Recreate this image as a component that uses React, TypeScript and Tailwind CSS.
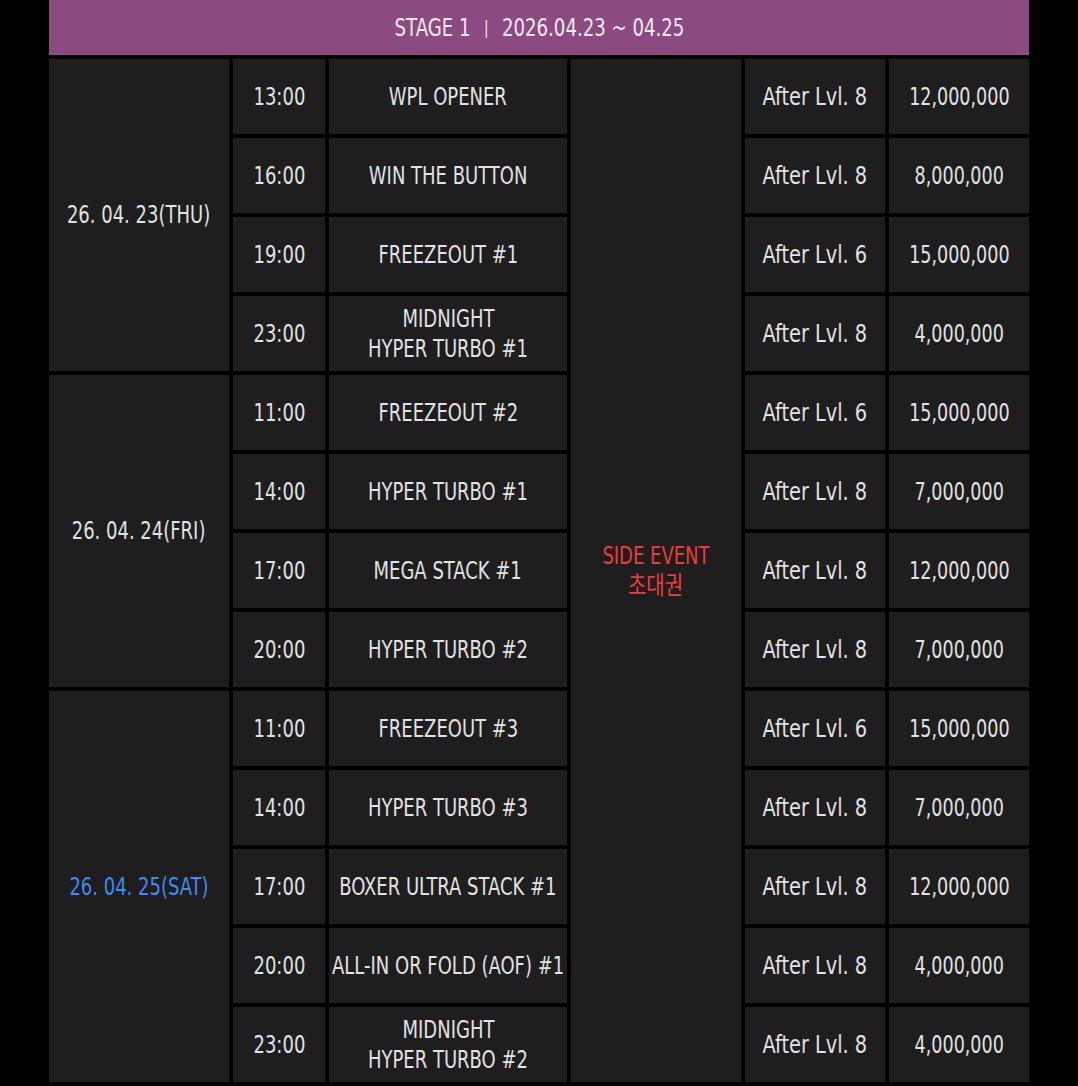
import React from "react";

type Row = { time: string; name: string[]; lvl: string; gtd: string };

const rows: Row[] = [
  { time: "13:00", name: ["WPL OPENER"], lvl: "After Lvl. 8", gtd: "12,000,000" },
  { time: "16:00", name: ["WIN THE BUTTON"], lvl: "After Lvl. 8", gtd: "8,000,000" },
  { time: "19:00", name: ["FREEZEOUT #1"], lvl: "After Lvl. 6", gtd: "15,000,000" },
  { time: "23:00", name: ["MIDNIGHT", "HYPER TURBO #1"], lvl: "After Lvl. 8", gtd: "4,000,000" },
  { time: "11:00", name: ["FREEZEOUT #2"], lvl: "After Lvl. 6", gtd: "15,000,000" },
  { time: "14:00", name: ["HYPER TURBO #1"], lvl: "After Lvl. 8", gtd: "7,000,000" },
  { time: "17:00", name: ["MEGA STACK #1"], lvl: "After Lvl. 8", gtd: "12,000,000" },
  { time: "20:00", name: ["HYPER TURBO #2"], lvl: "After Lvl. 8", gtd: "7,000,000" },
  { time: "11:00", name: ["FREEZEOUT #3"], lvl: "After Lvl. 6", gtd: "15,000,000" },
  { time: "14:00", name: ["HYPER TURBO #3"], lvl: "After Lvl. 8", gtd: "7,000,000" },
  { time: "17:00", name: ["BOXER ULTRA STACK #1"], lvl: "After Lvl. 8", gtd: "12,000,000" },
  { time: "20:00", name: ["ALL-IN OR FOLD (AOF) #1"], lvl: "After Lvl. 8", gtd: "4,000,000" },
  { time: "23:00", name: ["MIDNIGHT", "HYPER TURBO #2"], lvl: "After Lvl. 8", gtd: "4,000,000" },
];

const rowStarts = [
  "row-start-1",
  "row-start-2",
  "row-start-3",
  "row-start-4",
  "row-start-5",
  "row-start-6",
  "row-start-7",
  "row-start-8",
  "row-start-9",
  "row-start-10",
  "row-start-11",
  "row-start-12",
  "row-start-13",
];

const cell = "bg-[#1e1e1e] flex items-center justify-center text-center";
const light = "text-[#e2e2e2]";
const sq = "inline-block whitespace-nowrap scale-x-[0.8]";

export default function App() {
  return (
    <div className="min-h-screen bg-black pb-1 font-['DejaVu_Sans_Condensed','Noto_Sans_CJK_KR',sans-serif]">
      <div className="mx-auto w-[980px]">
        <div className="h-[55px] bg-[#8b4a80] flex items-center justify-center text-[#f3eaf2] text-[24px]">
          <span className="inline-block whitespace-nowrap scale-x-[0.84]">
            STAGE 1<span className="mx-[16px] text-[18px] relative -top-[2px]">|</span>2026.04.23 ~ 04.25
          </span>
        </div>
        <div className="mt-1 grid grid-cols-[180px_92px_238px_170px_140px_140px] auto-rows-[75px] gap-1 text-[25px] leading-[30px]">
          <div className={`${cell} ${light} col-start-1 row-start-1 row-span-4`}>
            <span className={sq}>26. 04. 23(THU)</span>
          </div>
          <div className={`${cell} ${light} col-start-1 row-start-5 row-span-4`}>
            <span className={sq}>26. 04. 24(FRI)</span>
          </div>
          <div className={`${cell} col-start-1 row-start-9 row-span-5 text-[#3f8cf0]`}>
            <span className={sq}>26. 04. 25(SAT)</span>
          </div>
          <div className={`${cell} col-start-4 row-start-1 row-span-13 flex-col text-[#ee3a3a]`}>
            <span className={sq}>SIDE EVENT</span>
            <span className={sq}>초대권</span>
          </div>
          {rows.map((r, i) => (
            <React.Fragment key={i}>
              <div className={`${cell} ${light} col-start-2 ${rowStarts[i]}`}>
                <span className={sq}>{r.time}</span>
              </div>
              <div className={`${cell} ${light} col-start-3 flex-col ${rowStarts[i]}`}>
                {r.name.map((n) => (
                  <span key={n} className={sq}>
                    {n}
                  </span>
                ))}
              </div>
              <div className={`${cell} ${light} col-start-5 ${rowStarts[i]}`}>
                <span className="inline-block whitespace-nowrap scale-x-[0.86]">{r.lvl}</span>
              </div>
              <div className={`${cell} ${light} col-start-6 ${rowStarts[i]}`}>
                <span className="inline-block whitespace-nowrap scale-x-[0.78]">{r.gtd}</span>
              </div>
            </React.Fragment>
          ))}
        </div>
      </div>
    </div>
  );
}
